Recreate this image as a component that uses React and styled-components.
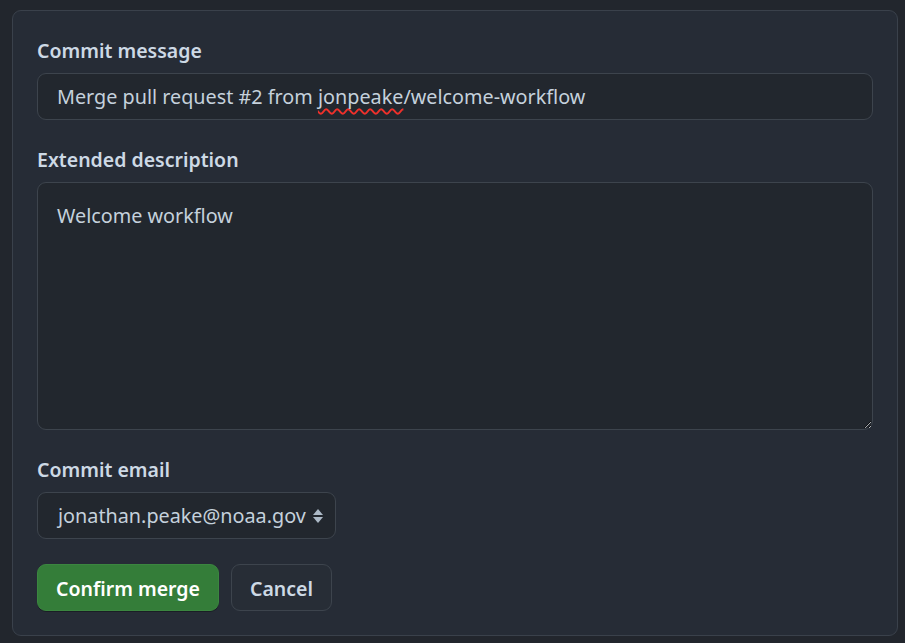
import React from 'react';
import styled, { createGlobalStyle } from 'styled-components';

const GlobalStyle = createGlobalStyle`
    html, body {
        margin: 0;
        padding: 0;
        background: #22262d;
        color-scheme: dark;
    }
    body {
        font-family: 'Noto Sans', 'Open Sans', sans-serif;
        height: 643px;
        overflow: hidden;
    }
`;

const Page = styled.div`
    padding: 10px 7px 0 12px;
`;

const Panel = styled.form`
    width: 886px;
    box-sizing: border-box;
    padding: 25px 24px 24px;
    background: #262c36;
    border: 1px solid #3a414b;
    border-radius: 9px;
    display: flex;
    flex-direction: column;
`;

const Group = styled.div`
    display: flex;
    flex-direction: column;
    margin-bottom: 25px;
`;

const Label = styled.label`
    font-size: 19.5px;
    font-weight: 600;
    line-height: 30px;
    color: #cdd9e5;
    margin-bottom: 7px;
    padding-top: 1px;
    margin-top: -1px;
`;

const fieldBase = `
    box-sizing: border-box;
    background: #22272e;
    border: 1px solid #3d444d;
    border-radius: 9px;
    color: #c5d1dc;
    font-family: 'Noto Sans', 'Open Sans', sans-serif;
    font-size: 19.8px;
`;

const TextField = styled.div`
    ${fieldBase}
    height: 47px;
    padding: 0 19px;
    display: flex;
    align-items: center;
    white-space: nowrap;
`;

const Misspelled = styled.span`
    text-decoration: underline wavy #f0302a;
    text-decoration-thickness: 1.5px;
    text-decoration-skip-ink: none;
    text-underline-offset: 4px;
`;

const TextArea = styled.textarea`
    ${fieldBase}
    width: 100%;
    height: 248px;
    padding: 18px 19px;
    line-height: 30px;
    resize: vertical;
    outline: none;
    display: block;
`;

const SelectBox = styled.div`
    ${fieldBase}
    align-self: flex-start;
    height: 47px;
    padding: 0 11px 0 20px;
    display: flex;
    align-items: center;
    gap: 6px;
`;

const Actions = styled.div`
    display: flex;
    gap: 12px;
`;

const Button = styled.button`
    height: 47px;
    box-sizing: border-box;
    padding: 2px 18px 0;
    border-radius: 9px;
    font-family: 'Noto Sans', 'Open Sans', sans-serif;
    font-size: 19.5px;
    font-weight: 600;
    cursor: pointer;
    color: ${props => (props.primary ? '#ffffff' : '#cdd9e5')};
    background: ${props => (props.primary ? '#347d39' : '#272d36')};
    border: 1px solid ${props => (props.primary ? '#3b8640' : '#3d444d')};
    box-shadow: ${props => (props.primary ? '0 1px 0 rgba(0,0,0,0.3)' : 'none')};
`;

const SortIcon = () => (
    <svg width="12" height="16" viewBox="0 0 12 16" fill="#adbac7">
        <path d="M6 1 L11 7 H1 Z" />
        <path d="M6 15 L11 9 H1 Z" />
    </svg>
);

const App = () => {
    return (
        <Page>
            <GlobalStyle />
            <Panel onSubmit={e => e.preventDefault()}>
                <Group>
                    <Label>Commit message</Label>
                    <TextField>
                        Merge pull request #2 from&nbsp;
                        <Misspelled>jonpeake</Misspelled>/welcome-workflow
                    </TextField>
                </Group>
                <Group>
                    <Label>Extended description</Label>
                    <TextArea defaultValue="Welcome workflow" spellCheck={false} />
                </Group>
                <Group>
                    <Label>Commit email</Label>
                    <SelectBox>
                        jonathan.peake@noaa.gov
                        <SortIcon />
                    </SelectBox>
                </Group>
                <Actions>
                    <Button primary type="button">Confirm merge</Button>
                    <Button type="button">Cancel</Button>
                </Actions>
            </Panel>
        </Page>
    );
};

export default App;
